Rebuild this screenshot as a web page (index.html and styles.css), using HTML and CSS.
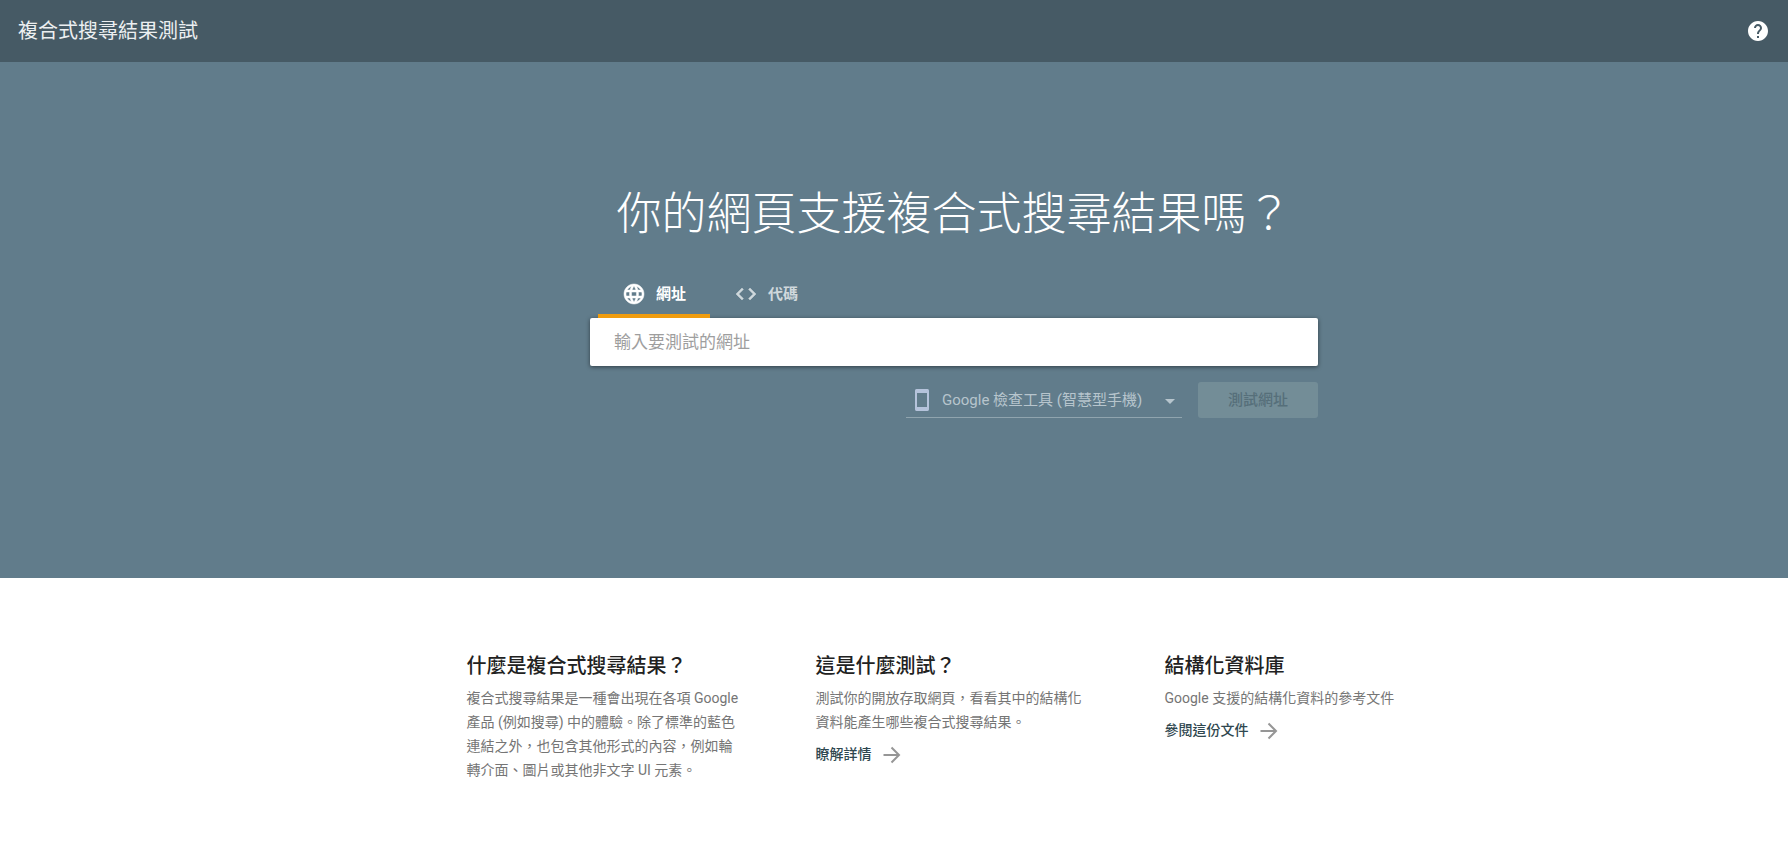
FILE: index.html
```html
<!DOCTYPE html>
<html lang="zh-Hant">
<head>
<meta charset="utf-8">
<meta name="viewport" content="width=device-width, initial-scale=1">
<title>複合式搜尋結果測試</title>
<link rel="stylesheet" href="styles.css">
</head>
<body>
<header class="topbar">
  <h1 class="topbar-title">複合式搜尋結果測試</h1>
  <button class="help" type="button" aria-label="說明">
    <svg class="icon" viewBox="0 0 24 24"><path d="M12 2C6.48 2 2 6.48 2 12s4.48 10 10 10 10-4.48 10-10S17.52 2 12 2zm1 17h-2v-2h2v2zm2.07-7.75l-.9.92C13.45 12.9 13 13.5 13 15h-2v-.5c0-1.1.45-2.1 1.17-2.83l1.24-1.26c.37-.36.59-.86.59-1.41 0-1.1-.9-2-2-2s-2 .9-2 2H8c0-2.21 1.79-4 4-4s4 1.79 4 4c0 .88-.36 1.68-.93 2.25z"/></svg>
  </button>
</header>
<main>
  <section class="hero">
    <h2 class="hero-title">你的網頁支援複合式搜尋結果嗎？</h2>
    <form class="tester">
      <div class="tabs" role="tablist">
        <button class="tab tab-active" type="button" role="tab" aria-selected="true">
          <svg class="icon tab-icon" viewBox="0 0 24 24"><path d="M11.99 2C6.47 2 2 6.48 2 12s4.47 10 9.99 10C17.52 22 22 17.52 22 12S17.52 2 11.99 2zm6.93 6h-2.95c-.32-1.25-.78-2.45-1.38-3.56 1.84.63 3.37 1.91 4.33 3.56zM12 4.04c.83 1.2 1.48 2.53 1.91 3.96h-3.82c.43-1.43 1.08-2.76 1.91-3.96zM4.26 14C4.1 13.36 4 12.69 4 12s.1-1.36.26-2h3.38c-.08.66-.14 1.32-.14 2s.06 1.34.14 2H4.26zm.82 2h2.95c.32 1.25.78 2.45 1.38 3.56-1.84-.63-3.37-1.9-4.33-3.56zm2.95-8H5.08c.96-1.66 2.49-2.93 4.33-3.56C8.81 5.55 8.35 6.75 8.03 8zM12 19.96c-.83-1.2-1.48-2.53-1.91-3.96h3.82c-.43 1.43-1.08 2.76-1.91 3.96zM14.34 14H9.66c-.09-.66-.16-1.32-.16-2s.07-1.35.16-2h4.68c.09.65.16 1.32.16 2s-.07 1.34-.16 2zm.25 5.56c.6-1.11 1.06-2.31 1.38-3.56h2.95c-.96 1.65-2.49 2.93-4.33 3.56zM16.36 14c.08-.66.14-1.32.14-2s-.06-1.34-.14-2h3.38c.16.64.26 1.31.26 2s-.1 1.36-.26 2h-3.38z"/></svg>
          網址
        </button>
        <button class="tab" type="button" role="tab" aria-selected="false">
          <svg class="icon tab-icon" viewBox="0 0 24 24"><path d="M9.4 16.6L4.8 12l4.6-4.6L8 6l-6 6 6 6 1.4-1.4zm5.2 0l4.6-4.6-4.6-4.6L16 6l6 6-6 6-1.4-1.4z"/></svg>
          代碼
        </button>
      </div>
      <input class="url-input" type="text" aria-label="輸入要測試的網址" placeholder="輸入要測試的網址">
      <div class="actions">
        <label class="agent">
          <svg class="icon phone" viewBox="0 0 24 24"><path fill-rule="evenodd" d="M6.500 1h11c1.100 0 1.500.9 1.500 2v18c0 1.100-.4 2-1.500 2h-11C5.400 23 5 22.100 5 21V3c0-1.100.4-2 1.500-2zM7 5v14h10V5z"/></svg>
          <select class="agent-select" aria-label="使用者代理程式">
            <option>Google 檢查工具 (智慧型手機)</option>
          </select>
          <svg class="icon" viewBox="0 0 24 24"><path d="M7 11l5 5 5-5z"/></svg>
        </label>
        <button class="submit" type="submit" disabled>測試網址</button>
      </div>
    </form>
  </section>
  <section class="info">
    <article class="card">
      <h3 class="card-title">什麼是複合式搜尋結果？</h3>
      <p class="card-text">複合式搜尋結果是一種會出現在各項 Google 產品 (例如搜尋) 中的體驗。除了標準的藍色連結之外，也包含其他形式的內容，例如輪轉介面、圖片或其他非文字 UI 元素。</p>
    </article>
    <article class="card">
      <h3 class="card-title">這是什麼測試？</h3>
      <p class="card-text">測試你的開放存取網頁，看看其中的結構化資料能產生哪些複合式搜尋結果。</p>
      <a class="card-link" href="#learn">瞭解詳情
        <svg class="icon arrow" viewBox="0 0 24 24"><path d="M3.500 13h15M11.500 5.500l7.500 7.500-7.500 7.500"/></svg>
      </a>
    </article>
    <article class="card">
      <h3 class="card-title">結構化資料庫</h3>
      <p class="card-text">Google 支援的結構化資料的參考文件</p>
      <a class="card-link" href="#docs">參閱這份文件
        <svg class="icon arrow" viewBox="0 0 24 24"><path d="M3.500 13h15M11.500 5.500l7.500 7.500-7.500 7.500"/></svg>
      </a>
    </article>
  </section>
</main>
</body>
</html>
```
FILE: styles.css
```css
* {
  box-sizing: border-box;
}

body {
  margin: 0;
  background: #fff;
  color: #212121;
  font-family: Roboto, "Noto Sans CJK TC", sans-serif;
  font-size: 14px;
  line-height: 24px;
}

h1, h2, h3, p {
  margin: 0;
}

button, input, select {
  font: inherit;
}

.icon {
  width: 24px;
  height: 24px;
  flex: none;
  fill: currentColor;
}

.topbar {
  display: flex;
  align-items: center;
  justify-content: space-between;
  height: 62px;
  padding: 0 18px 1px;
  background: #465a65;
  color: #eceff1;
}

.topbar-title {
  font-size: 20px;
  font-weight: 400;
}

.help {
  display: flex;
  padding: 0;
  border: 0;
  background: none;
  color: #fff;
}

.hero {
  display: flex;
  flex-direction: column;
  align-items: center;
  padding: 121px 0 160px 120px;
  background: #617c8b;
  color: #fff;
}

.hero-title {
  font-size: 45px;
  font-weight: 300;
  line-height: 64px;
}

.tester {
  width: 100%;
  max-width: 728px;
  margin-top: 23px;
}

.tabs {
  display: flex;
  padding-left: 8px;
}

.tab {
  display: flex;
  align-items: center;
  gap: 10px;
  height: 48px;
  padding: 4px 24px 0;
  border: 0;
  border-bottom: 4px solid transparent;
  background: none;
  color: #cfd8dc;
  font-size: 15px;
  font-weight: 700;
}

.tab-active {
  border-color: #ef9c0e;
  color: #fff;
}

.tab-icon {
  stroke: currentColor;
  stroke-width: 0.5;
}

.url-input {
  display: block;
  width: 100%;
  height: 48px;
  padding: 0 24px;
  border: 0;
  border-radius: 2px;
  background: #fff;
  box-shadow: 0 1px 4px rgba(0, 0, 0, 0.5);
  color: #212121;
  font-size: 17px;
}

.url-input::placeholder {
  color: #9e9e9e;
  opacity: 1;
}

.actions {
  display: flex;
  justify-content: flex-end;
  gap: 16px;
  margin-top: 16px;
}

.agent {
  display: flex;
  align-items: center;
  width: 276px;
  height: 36px;
  padding-left: 4px;
  border-bottom: 1px solid #90a4ae;
  color: #b7c5cd;
}

.phone {
  color: #b5c3db;
}

.agent-select {
  flex: 1;
  min-width: 0;
  margin-left: 8px;
  padding: 0;
  border: 0;
  appearance: none;
  background: none;
  color: inherit;
  font-size: 15px;
}

.submit {
  width: 120px;
  height: 36px;
  padding: 0;
  border: 0;
  border-radius: 3px;
  background: #738d97;
  color: #566f7a;
  font-size: 15px;
  font-weight: 500;
}

.info {
  display: grid;
  grid-template-columns: repeat(3, minmax(0, 349px));
  justify-content: center;
  padding: 72px 0 48px 120px;
}

.card {
  padding: 0 36px;
}

.card-title {
  font-size: 20px;
  font-weight: 500;
  line-height: 32px;
}

.card-text {
  margin-top: 4px;
  color: #757575;
}

.card-link {
  display: inline-flex;
  align-items: center;
  gap: 8px;
  margin-top: 8px;
  color: #2f474f;
  font-weight: 500;
  text-decoration: none;
}

.arrow {
  fill: none;
  stroke: #969696;
  stroke-width: 2;
}
```
